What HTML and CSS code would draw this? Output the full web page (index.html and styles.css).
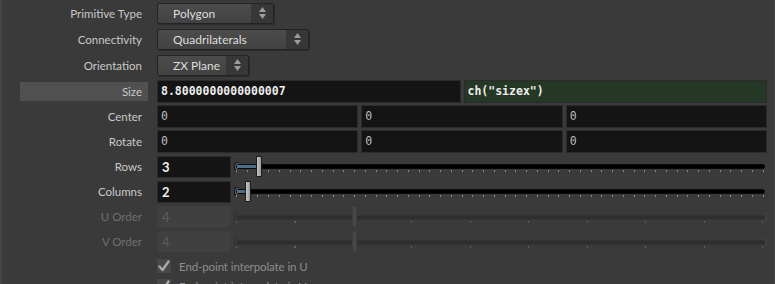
FILE: index.html
```html
<!DOCTYPE html>
<html lang="en">

<head>
    <meta charset="UTF-8">
    <meta name="viewport" content="width=device-width, initial-scale=1.0">
    <title>Grid Parameters</title>
    <link rel="stylesheet" href="styles.css">
</head>

<body>
    <div class="panel">
        <div class="row row-menu">
            <span class="label">Primitive Type</span>
            <div class="menu menu-primtype">
                <span class="menu-text">Polygon</span>
                <span class="menu-arrows">
                    <svg width="7" height="12" viewBox="0 0 7 12"><polygon points="0,5 3.5,0 7,5" /><polygon points="0,7 7,7 3.5,12" /></svg>
                </span>
            </div>
        </div>
        <div class="row row-menu">
            <span class="label">Connectivity</span>
            <div class="menu menu-connect">
                <span class="menu-text">Quadrilaterals</span>
                <span class="menu-arrows">
                    <svg width="7" height="12" viewBox="0 0 7 12"><polygon points="0,5 3.5,0 7,5" /><polygon points="0,7 7,7 3.5,12" /></svg>
                </span>
            </div>
        </div>
        <div class="row row-menu">
            <span class="label">Orientation</span>
            <div class="menu menu-orient">
                <span class="menu-text">ZX Plane</span>
                <span class="menu-arrows">
                    <svg width="7" height="12" viewBox="0 0 7 12"><polygon points="0,5 3.5,0 7,5" /><polygon points="0,7 7,7 3.5,12" /></svg>
                </span>
            </div>
        </div>

        <div class="row row-size">
            <span class="label label-active">Size</span>
            <div class="fields">
                <div class="field field-strong">8.8000000000000007</div>
                <div class="field field-strong field-expr">ch("sizex")</div>
            </div>
        </div>
        <div class="row">
            <span class="label">Center</span>
            <div class="fields">
                <div class="field">0</div>
                <div class="field">0</div>
                <div class="field">0</div>
            </div>
        </div>
        <div class="row">
            <span class="label">Rotate</span>
            <div class="fields">
                <div class="field">0</div>
                <div class="field">0</div>
                <div class="field">0</div>
            </div>
        </div>

        <div class="row">
            <span class="label">Rows</span>
            <div class="intfield">3</div>
            <div class="slider">
                <span class="slider-cap"></span>
                <span class="track"></span>
                <span class="fill" style="width: 21px"></span>
                <span class="ticks"></span>
                <span class="thumb" style="left: 21px"></span>
            </div>
        </div>
        <div class="row">
            <span class="label">Columns</span>
            <div class="intfield">2</div>
            <div class="slider">
                <span class="slider-cap"></span>
                <span class="track"></span>
                <span class="fill" style="width: 10px"></span>
                <span class="ticks"></span>
                <span class="thumb" style="left: 10px"></span>
            </div>
        </div>
        <div class="row row-disabled">
            <span class="label">U Order</span>
            <div class="intfield">4</div>
            <div class="slider">
                <span class="slider-cap"></span>
                <span class="track"></span>
                <span class="ticks"></span>
                <span class="slider-end"></span>
                <span class="thumb" style="left: 117px"></span>
            </div>
        </div>
        <div class="row row-disabled">
            <span class="label">V Order</span>
            <div class="intfield">4</div>
            <div class="slider">
                <span class="slider-cap"></span>
                <span class="track"></span>
                <span class="ticks"></span>
                <span class="slider-end"></span>
                <span class="thumb" style="left: 117px"></span>
            </div>
        </div>

        <div class="check-row">
            <span class="checkbox">
                <svg width="14" height="14" viewBox="0 0 14 14"><path d="M2.5 7.5 L5.5 11 L11.5 2.5" /></svg>
            </span>
            <span class="check-label">End-point interpolate in U</span>
        </div>
        <div class="check-row">
            <span class="checkbox">
                <svg width="14" height="14" viewBox="0 0 14 14"><path d="M2.5 7.5 L5.5 11 L11.5 2.5" /></svg>
            </span>
            <span class="check-label">End-point interpolate in V</span>
        </div>
    </div>
</body>

</html>
```

FILE: styles.css
```css
* {
    box-sizing: border-box;
}

body {
    width: 775px;
    height: 284px;
    margin: 0;
    overflow: hidden;
    background-color: #3a3a3a;
    color: #c9c9c9;
    font-family: Lato, "Noto Sans", sans-serif;
    font-size: 11.5px;
}

.panel {
    height: 284px;
    overflow: hidden;
    border-left: 2px solid #464646;
    border-right: 1px solid #454545;
}

/* -- Parameter rows -- */

.row {
    display: flex;
    align-items: center;
    height: 25px;
}

.row-menu {
    height: 26px;
}

.row-size {
    margin-top: 1px;
}

.label {
    flex: none;
    width: 128px;
    height: 19px;
    margin-left: 18px;
    margin-right: 9px;
    padding-right: 6px;
    line-height: 19px;
    text-align: right;
    white-space: nowrap;
}

.label-active {
    background-color: #505050;
}

.row-disabled .label {
    color: #6f6f6f;
}

/* -- Menu buttons -- */

.menu {
    display: flex;
    height: 21px;
    border: 1px solid #232323;
    border-radius: 2px;
    background: linear-gradient(#4c4c4c, #424242);
    box-shadow: 1px 1px 0 rgba(0, 0, 0, 0.25);
}

.menu-primtype {
    width: 117px;
}

.menu-connect {
    width: 152px;
}

.menu-orient {
    width: 92px;
}

.menu-text {
    flex: 1;
    padding-left: 15px;
    line-height: 19px;
    color: #dedede;
    font-size: 12px;
}

.menu-arrows {
    display: flex;
    align-items: center;
    justify-content: center;
    width: 22px;
    background-color: #373737;
}

.menu-arrows svg {
    fill: #9c9c9c;
}

/* -- Text fields -- */

.fields {
    display: flex;
    flex: 1;
    gap: 3px;
    margin-right: 7px;
}

.field {
    flex: 1;
    height: 23px;
    padding-left: 3px;
    border: 1px solid #2b2b2b;
    background-color: #141414;
    color: #bdbdbd;
    font-family: "DejaVu Sans Mono", monospace;
    font-size: 11.5px;
    line-height: 21px;
    white-space: nowrap;
    overflow: hidden;
}

.field-strong {
    color: #ececec;
    font-weight: bold;
}

.field-expr {
    background-color: #253825;
}

.intfield {
    flex: none;
    width: 74px;
    height: 22px;
    padding-left: 4px;
    border: 1px solid #2b2b2b;
    background-color: #141414;
    color: #f0f0f0;
    font-size: 13px;
    font-weight: bold;
    line-height: 20px;
}

.row-disabled .intfield {
    border-color: #3c3c3c;
    background-color: #404040;
    color: #5e5e5e;
    font-weight: normal;
}

/* -- Sliders -- */

.slider {
    position: relative;
    flex: 1;
    height: 22px;
    margin-left: 4px;
    margin-right: 9px;
}

.slider-cap {
    position: absolute;
    left: -1px;
    top: 6px;
    width: 4px;
    height: 9px;
    border: 1px solid #161616;
    border-right: none;
    border-radius: 3px 0 0 3px;
    background-color: #5a5a5a;
}

.track {
    position: absolute;
    left: 1px;
    right: 0;
    top: 8px;
    height: 5px;
    border: 1px solid #0a0a0a;
    border-radius: 3px;
    background-color: #000;
}

.fill {
    position: absolute;
    left: 2px;
    top: 9px;
    height: 3px;
    background-color: #4f6e8c;
}

.ticks {
    position: absolute;
    left: 1px;
    right: 0;
    top: 14px;
    height: 2px;
    background: repeating-linear-gradient(to right, #8a8a8a 0 1px, transparent 1px 10.745px);
}

.thumb {
    position: absolute;
    top: 0;
    width: 6px;
    height: 21px;
    border: 1px solid #1c1c1c;
    border-radius: 1px;
    background: linear-gradient(to right, #c4c4c4, #9a9a9a);
}

.row-disabled .slider-cap {
    border-color: #333;
    background-color: #3a3a3a;
}

.row-disabled .track {
    top: 9px;
    height: 5px;
    border-color: #333;
    background-color: #2e2e2e;
}

.row-disabled .ticks {
    top: 15px;
    background: repeating-linear-gradient(to right, #5f5f5f 0 1px, transparent 1px 58.5px);
}

.slider-end {
    position: absolute;
    right: -2px;
    top: 6px;
    width: 3px;
    height: 10px;
    border: 1px solid #444;
    border-left: none;
    border-radius: 0 3px 3px 0;
}

.row-disabled .thumb {
    width: 5px;
    border-color: #3c3c3c;
    background: #484848;
}

/* -- Toggles -- */

.row-disabled + .check-row {
    margin-top: 2px;
}

.check-row {
    display: flex;
    align-items: center;
    gap: 8px;
    height: 20px;
    padding-left: 155px;
}

.checkbox {
    display: flex;
    width: 14px;
    height: 14px;
    background-color: #474747;
}

.checkbox svg {
    fill: none;
    stroke: #a9a9a9;
    stroke-width: 2.4;
    stroke-linecap: round;
    stroke-linejoin: round;
}

.check-label {
    color: #8e8e8e;
    font-size: 11.5px;
    letter-spacing: -0.1px;
}
```
